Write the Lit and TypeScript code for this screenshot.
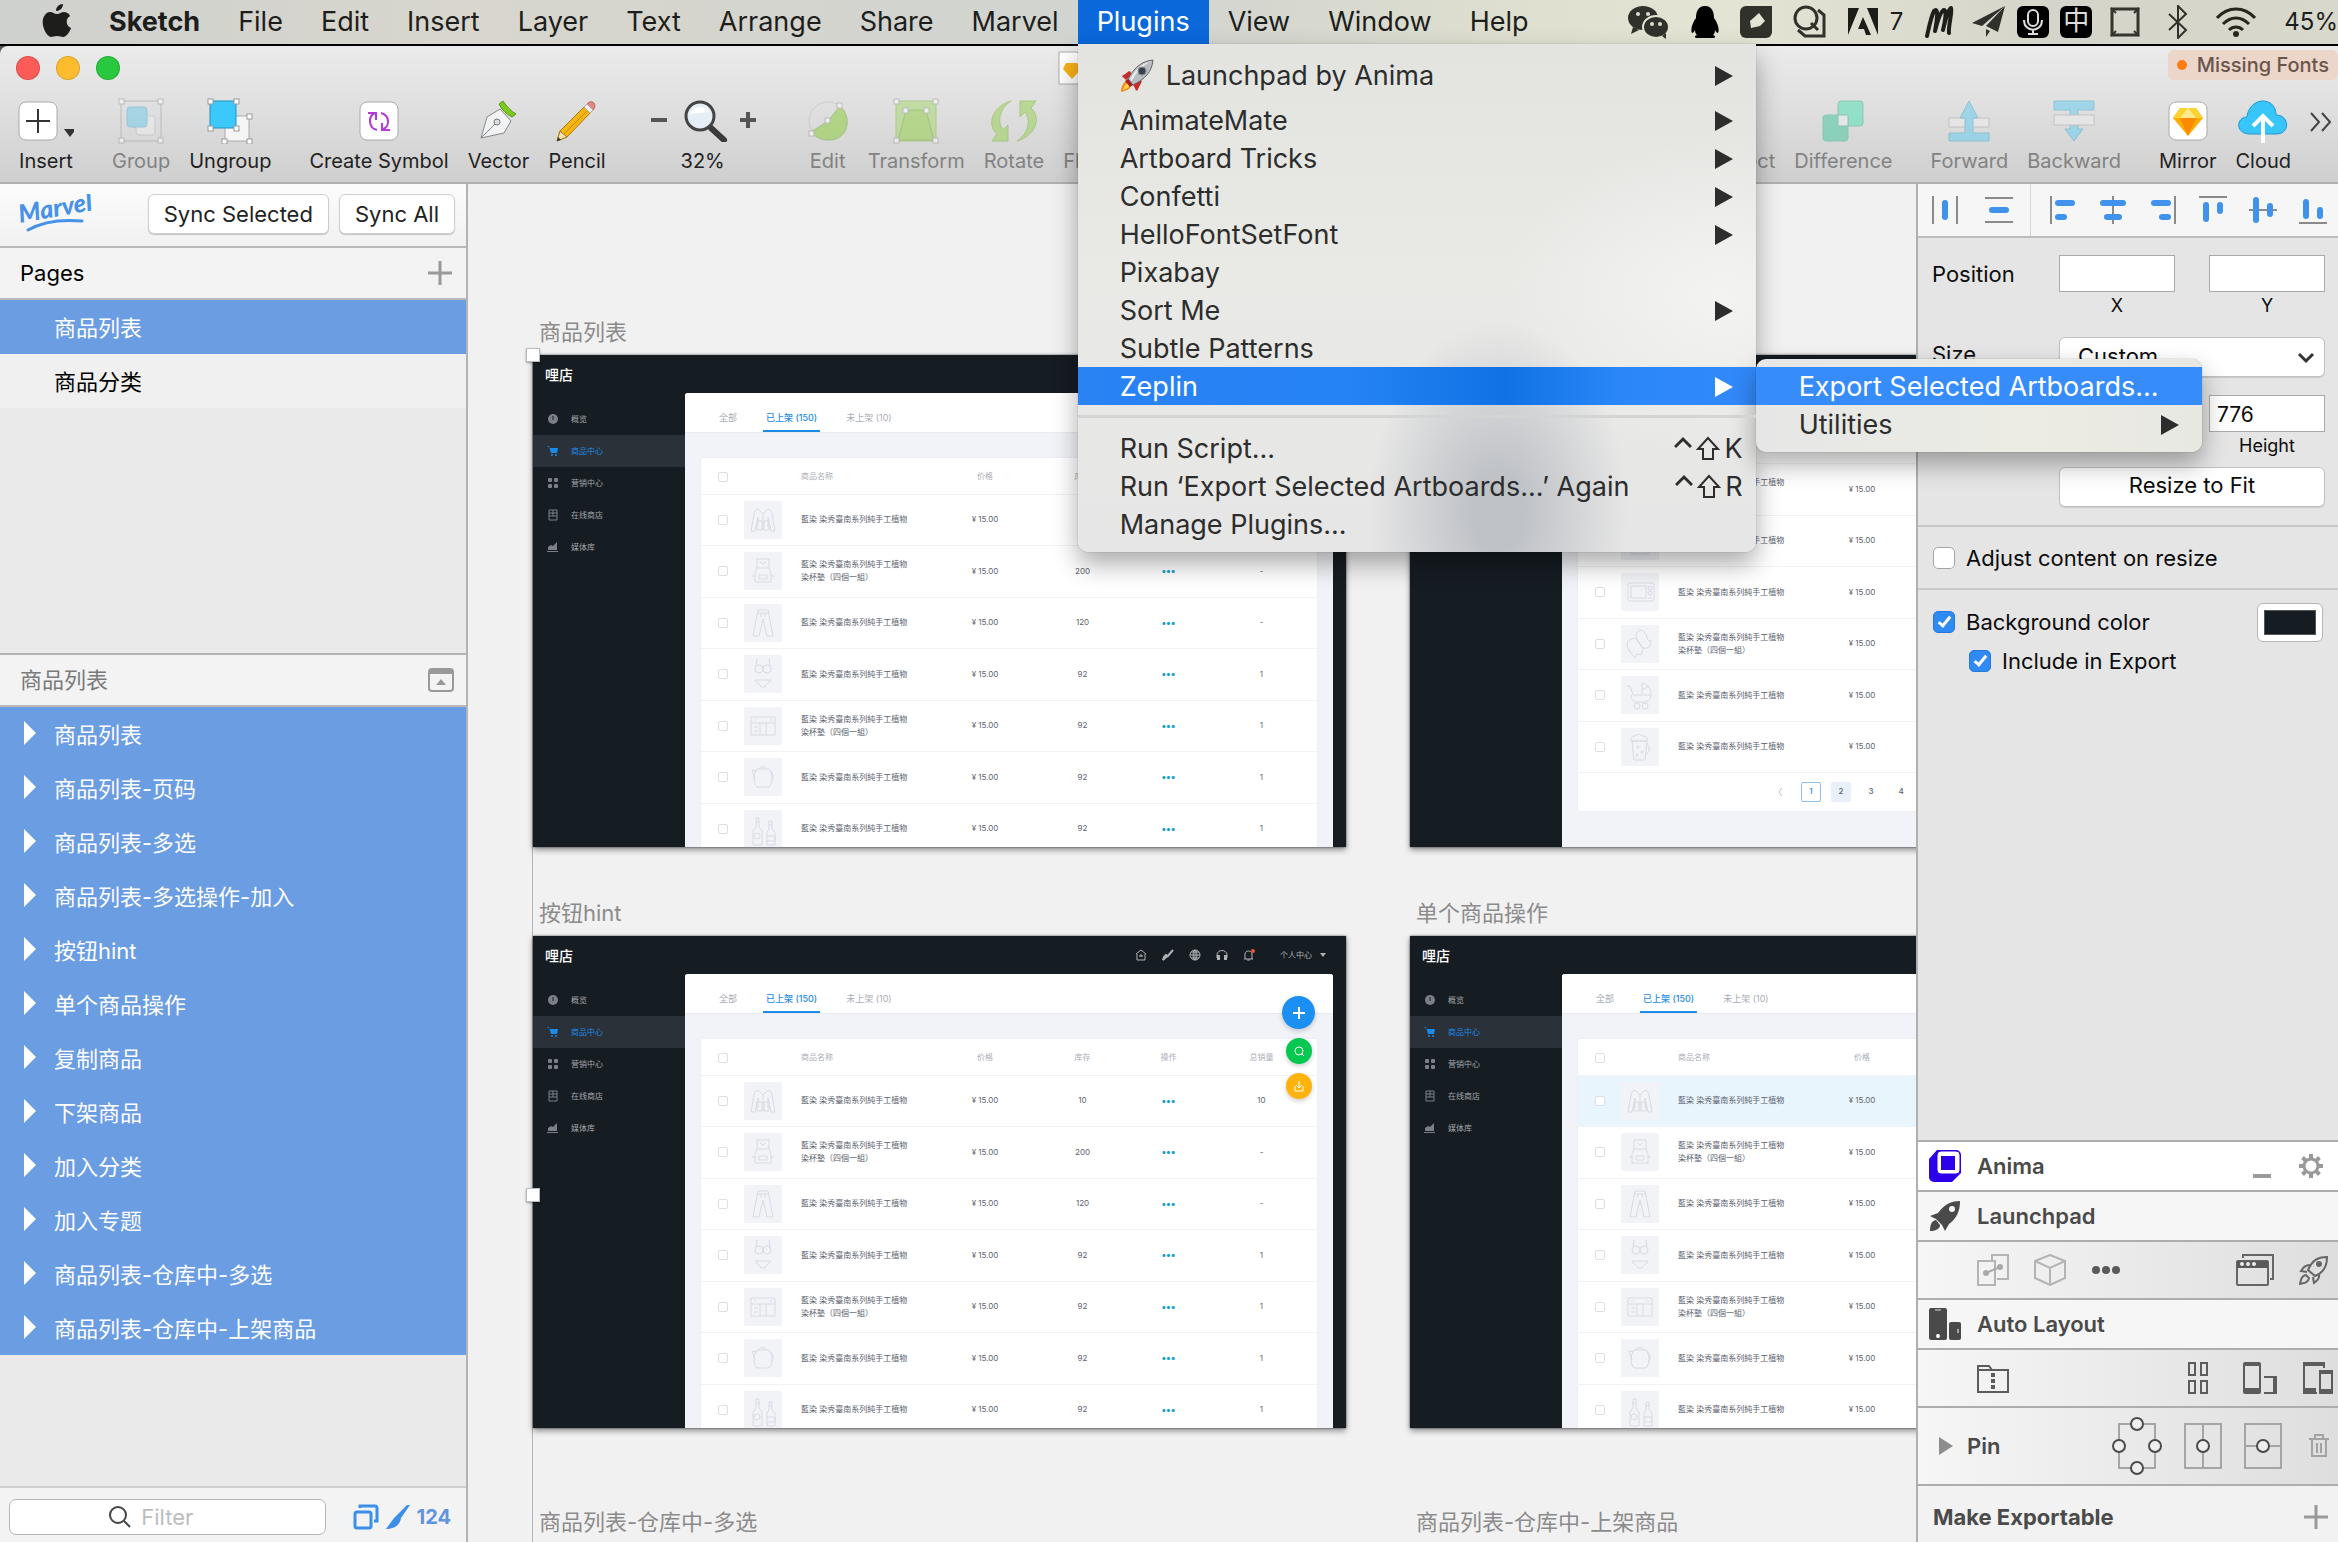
import { LitElement, html, css, svg, nothing, type TemplateResult } from "lit";
import { customElement, property } from "lit/decorators.js";
import { classMap } from "lit/directives/class-map.js";

const base = css`
  *, *::before, *::after { box-sizing: border-box; }
  button { font: inherit; color: inherit; background: none; border: 0; padding: 0; margin: 0; }
  input, select { font: inherit; color: inherit; margin: 0; }
  ul { list-style: none; margin: 0; padding: 0; }
  h2, figure, p { margin: 0; font: inherit; }
  a { color: inherit; text-decoration: none; }
  svg { display: block; flex: none; }
`;

const icon = (w: number, h: number, body: unknown) =>
  html`<svg width=${w} height=${h} viewBox="0 0 ${w} ${h}" fill="none" aria-hidden="true">${body}</svg>`;

/* ---------- product thumbnails ---------- */

const goods: Record<string, TemplateResult> = {
  jacket: svg`<path d="M14 8c-3 1-4 3-4 5L7 30h4l3-14v10M24 8c3 1 4 3 4 5l3 17h-4l-3-14v10M14 8l5 5 5-5M19 13v16M13 20h5v9h-5zM20 20h5v9h-5z"/>`,
  apron: svg`<rect x="13" y="7" width="12" height="9"/><path d="M13 16l-2 5v9h16v-9l-2-5M16 10l3 2 3-2M8 24h3M27 24h3M15 23h8v4h-8z"/>`,
  trousers: svg`<path d="M14 6h10l5 26h-6l-4-17-4 17H9zM14 9h10M17 9v4M21 9v4"/>`,
  bikini: svg`<circle cx="15" cy="14" r="4"/><circle cx="23" cy="14" r="4"/><path d="M12 11l1-7M26 11l-1-7M11 25h16c-1 3-5 3-6 7h-4c-1-4-5-4-6-7z"/>`,
  cabinet: svg`<path d="M7 10h24v18H7zM7 16h24M16 16v12M22 16v12M10 13h2M26 13h2M10 20h4M10 24h4"/>`,
  pot: svg`<path d="M13 11c-4 5-4 14 0 18h12c4-4 4-13 0-18zM15 11c0-3 8-3 8 0M13 13l-5-1 3 9M26 13c4 1 4 8 1 10"/>`,
  bottles: svg`<path d="M12 8h3v9l3 4v14H9V21l3-4zM12 12h3M25 11h3v8l3 3v13h-8V22l2-3zM25 15h3"/><circle cx="13" cy="26" r="3"/><path d="M23 26h8v5h-8"/>`,
  lamp: svg`<path d="M12 8h14l3 10H9zM19 18v10M13 30h12"/>`,
  clock: svg`<circle cx="19" cy="18" r="9"/><path d="M19 12v6l4 2M13 27h12v5H13z"/>`,
  jar: svg`<path d="M12 8h14v4H12zM11 14h16v18H11zM14 20h10v6H14z"/>`,
  oven: svg`<rect x="7" y="10" width="26" height="18" rx="2"/><rect x="10" y="13" width="15" height="12"/><circle cx="29" cy="15" r="2"/><circle cx="29" cy="20" r="2"/><path d="M27 25h4"/>`,
  mittens: svg`<path d="M17 6c5-3 8 3 10 9l3 1-1 5c-3 3-7 3-9 0-4-5-7-11-3-15zM10 14c5-2 8 2 12 10l-2 6-4-1-2 4-4-5c-5-5-5-12 0-14z"/>`,
  pram: svg`<path d="M6 10h3l3 9h18c0 5-4 7-8 7h-6c-4 0-6-3-6-7M21 18V7c5 1 9 5 9 11M21 14l7-4"/><circle cx="16" cy="30" r="3"/><circle cx="24" cy="30" r="3"/>`,
  beer: svg`<path d="M11 13h15l-2 19H13zM10 13c-1-4 3-5 4-5 3-3 6-1 8 0 3 0 5 2 4 5zM25 16c4-1 5 10-1 10"/><circle cx="17" cy="19" r="1"/><circle cx="21" cy="24" r="1"/><circle cx="16" cy="27" r="1"/>`,
};

interface Product { art: string; long?: boolean; stock: string; sales: string; }

const firstPage: Product[] = [
  { art: "jacket", stock: "10", sales: "10" },
  { art: "apron", long: true, stock: "200", sales: "-" },
  { art: "trousers", stock: "120", sales: "-" },
  { art: "bikini", stock: "92", sales: "1" },
  { art: "cabinet", long: true, stock: "92", sales: "1" },
  { art: "pot", stock: "92", sales: "1" },
  { art: "bottles", stock: "92", sales: "1" },
];

const lastPage: Product[] = [
  { art: "lamp", stock: "92", sales: "1" },
  { art: "clock", long: true, stock: "92", sales: "1" },
  { art: "jar", stock: "92", sales: "1" },
  { art: "oven", stock: "92", sales: "1" },
  { art: "mittens", long: true, stock: "92", sales: "1" },
  { art: "pram", stock: "92", sales: "1" },
  { art: "beer", stock: "92", sales: "1" },
];

const shopNav = [
  { label: "概览", art: svg`<circle cx="6" cy="6" r="5" fill="currentColor"/><path d="M6 3v4" stroke="#151c22"/>` },
  { label: "商品中心", art: svg`<path d="M0 1h2l2 7h6l1-5H3z" fill="currentColor"/><circle cx="5" cy="10" r="1" fill="currentColor"/><circle cx="9" cy="10" r="1" fill="currentColor"/>` },
  { label: "营销中心", art: svg`<g fill="currentColor"><rect x="1" y="1" width="4" height="4" rx="1"/><rect x="7" y="1" width="4" height="4" rx="1"/><rect x="1" y="7" width="4" height="4" rx="1"/><rect x="7" y="7" width="4" height="4" rx="1"/></g>` },
  { label: "在线商店", art: svg`<path d="M2 1h8v10H2zM2 4h8M2 7h8M6 1v6" stroke="currentColor"/>` },
  { label: "媒体库", art: svg`<path d="M1 9V6l3-2 2 1 4-4v8zM0 10h11v1H0z" fill="currentColor"/>` },
];

@customElement("shop-board")
export class ShopBoard extends LitElement {
  @property({ type: Boolean }) tail = false;
  @property({ type: Boolean }) hints = false;
  @property({ type: Boolean }) highlight = false;

  static styles = [base, css`
    :host {
      display: grid; grid-template-columns: 152px 1fr 13px; grid-template-rows: 38px 1fr;
      width: 813px; height: 492px; overflow: hidden; position: relative;
      background: #151c22; color: #5c6270;
      font: 8px/13px "Inter", "Noto Sans CJK SC", sans-serif;
    }
    .head { grid-column: 1 / -1; display: flex; align-items: center; padding: 0 20px 0 12px; color: #aeb2b6; }
    .logo { font: 500 14px/16px "Noto Sans CJK SC", sans-serif; color: #fff; margin-right: auto; }
    .tools { display: flex; align-items: center; gap: 15px; }
    .user { display: flex; align-items: center; gap: 8px; margin-left: 10px; }
    .nav { padding-top: 10px; color: #a3a7ab; }
    .nav a { display: flex; align-items: center; gap: 12px; height: 32px; padding-left: 14px; }
    .nav svg { color: #7b8086; }
    .nav a.on { background: #2a3138; color: #1c8be6; }
    .nav a.on svg { color: #1c8be6; }
    .panel { background: #f2f3f8; border-radius: 3px 3px 0 0; overflow: hidden; min-width: 0; }
    .tabs { display: flex; gap: 23px; height: 39px; padding: 0 31px; background: #fff; font-size: 9px; box-shadow: 0 1px 1px #e9eaf0; }
    .tabs button { padding: 18px 3px 0; color: #a9acb6; display: flex; }
    .tabs .on { color: #1c8be6; border-bottom: 2px solid #1c8be6; font-weight: 500; }
    .body { padding: 26px 16px 0; }
    .tail .body { padding-top: 19px; }
    .card { background: #fff; box-shadow: 0 0 2px #e3e5ec; border-radius: 2px; }
    table { border-collapse: collapse; table-layout: fixed; width: 100%; }
    th, td { padding: 0; font-weight: 400; text-align: center; border-bottom: 1px solid #f1f2f5; }
    th { height: 36px; padding-top: 2px; color: #a9acb6; }
    td { height: 51px; }
    tr:nth-child(even) td { height: 52px; }
    tr.lit td { background: #e8f5fd; }
    .c1 { width: 43px; } .c2 { width: 56px; } .c3 { width: 136px; } .c4 { width: 98px; } .c5 { width: 97px; } .c6 { width: 75px; }
    .name { text-align: left; white-space: pre; padding-left: 1px; }
    .more { color: #1ba0cf; font: 700 10px/13px "Inter", sans-serif; }
    input { appearance: none; width: 10px; height: 10px; border: 1px solid #dddfe6; border-radius: 2px; background: #fff; display: block; margin: 0 auto; }
    .thumb { width: 38px; height: 38px; background: #f2f3f7; border-radius: 1px; stroke: #d9dae2; }
    .pages { display: flex; justify-content: flex-end; gap: 10px; height: 38px; align-items: center; padding-right: 283px; font-weight: 500; }
    .pages button { width: 20px; height: 20px; border-radius: 2px; text-align: center; }
    .pages .prev { display: grid; place-items: center; }
    .pages .now { border: 1px solid #8fc0e8; color: #1c8be6; }
    .pages .next { background: #e9f0fa; }
    .fabs { position: absolute; right: 31px; top: 60px; display: flex; flex-direction: column; align-items: center; gap: 9px; }
    .fabs button { width: 26px; height: 26px; border-radius: 50%; display: grid; place-items: center; color: #fff; box-shadow: 0 2px 5px #0003; }
    .fabs .add { width: 33px; height: 33px; background: #1b90f2; }
    .fabs .find { background: #05c850; }
    .fabs .save { background: #fdb30c; }
  `];

  private row(p: Product, i: number) {
    return html`<tr class=${classMap({ lit: this.highlight && i === 0 })}>
      <td><input type="checkbox" aria-label="选择商品 ${i + 1}"></td>
      <td><svg class="thumb" width="38" height="38" viewBox="0 0 38 38" fill="none" aria-hidden="true">${goods[p.art]}</svg></td>
      <td class="name">${"藍染 染秀臺南系列純手工植物" + (p.long ? "\n染杯墊（四個一組）" : "")}</td>
      <td>¥ 15.00</td><td>${p.stock}</td>
      <td><button class="more" aria-label="操作">•••</button></td>
      <td>${p.sales}</td>
    </tr>`;
  }

  render() {
    return html`
      <header class="head">
        <span class="logo">哩店</span>
        <span class="tools">
          ${icon(12, 12, svg`<path d="M1 5l5-4 5 4M2 5v6h8V5M6 5v3M4 7h4" stroke="currentColor"/>`)}
          ${icon(12, 12, svg`<path d="M11 1L5 8M5 7l-4 4 1-3 2-2z" stroke="currentColor" stroke-width="2"/>`)}
          ${icon(12, 12, svg`<circle cx="6" cy="6" r="5" stroke="currentColor"/><path d="M1 6h10M6 1v10M2 3h8M2 9h8" stroke="currentColor"/><ellipse cx="6" cy="6" rx="2" ry="5" stroke="currentColor"/>`)}
          ${icon(12, 12, svg`<path d="M1 9V6c0-6 10-6 10 0v3" stroke="currentColor"/><path d="M1 6h3v5H1zM8 6h3v5H8z" fill="currentColor"/>`)}
          ${icon(12, 12, svg`<path d="M1 10h9M2 10V5c0-4 7-4 7 0v5M4 11h3" stroke="currentColor"/><circle cx="10" cy="2" r="2" fill="#ea5433"/>`)}
          <span class="user">个人中心 ${icon(6, 4, svg`<path d="M0 0h6L3 4z" fill="currentColor"/>`)}</span>
        </span>
      </header>
      <nav class="nav">
        ${shopNav.map((n, i) => html`<a href="#" class=${classMap({ on: i === 1 })}>${icon(12, 12, n.art)}${n.label}</a>`)}
      </nav>
      <section class="panel ${this.tail ? "tail" : ""}">
        ${this.tail ? nothing : html`<div class="tabs">
          <button>全部</button><button class="on">已上架 (150)</button><button>未上架 (10)</button>
        </div>`}
        <div class="body"><div class="card">
          <table>
            <colgroup><col class="c1"><col class="c2"><col class="c3"><col class="c4"><col class="c5"><col class="c6"><col></colgroup>
            ${this.tail ? nothing : html`<thead><tr>
              <th><input type="checkbox" aria-label="全选"></th><th></th><th class="name">商品名称</th>
              <th>价格</th><th>库存</th><th>操作</th><th>总销量</th>
            </tr></thead>`}
            <tbody>${(this.tail ? lastPage : firstPage).map((p, i) => this.row(p, i))}</tbody>
          </table>
          ${this.tail ? html`<div class="pages">
            <button class="prev" aria-label="上一页">${icon(10, 10, svg`<path d="M6 1L3 5l3 4" stroke="#b9bcc4"/>`)}</button>
            <button class="now">1</button><button class="next">2</button><button>3</button><button>4</button>
          </div>` : nothing}
        </div></div>
      </section>
      ${this.hints ? html`<div class="fabs">
        <button class="add" aria-label="添加">${icon(14, 14, svg`<path d="M7 1v12M1 7h12" stroke="currentColor" stroke-width="2"/>`)}</button>
        <button class="find" aria-label="搜索">${icon(12, 12, svg`<circle cx="6" cy="6" r="4" stroke="currentColor"/><path d="M8 8l3 3" stroke="currentColor"/>`)}</button>
        <button class="save" aria-label="导入">${icon(12, 12, svg`<path d="M2 6v5h8V6M6 1v7M3 5l3 3 3-3" stroke="currentColor"/>`)}</button>
      </div>` : nothing}`;
  }
}

/* ---------- system menu bar and plugins menu ---------- */

const arrow = icon(18, 20, svg`<path d="M0 0l18 10L0 20z" fill="currentColor"/>`);

const rocketEmoji = icon(34, 34, svg`
  <path d="M9 12l-7 6 6 1zM21 24l-5 8-2-7z" fill="#d5322c"/><path d="M10 12L2 17l4 4 6-5zM22 22l-5 10-4-6 4-5z" fill="#c52b28"/>
  <path d="M8 21c-5 2-7 7-7 12 5-1 10-3 11-8z" fill="#f08a1c"/><path d="M8 23c-3 2-4 5-5 8 3-1 6-2 7-5z" fill="#fcd34a"/>
  <path d="M33 1C23 2 15 7 8 20l5 6C25 20 32 13 33 1z" fill="#b9bcc0" stroke="#63666a"/><path d="M32 2C23 4 16 9 10 20l2 2C17 12 23 6 32 2z" fill="#e9ebec"/>
  <path d="M8 20l5 6-3 2-5-6z" fill="#a61f20"/><circle cx="22" cy="12" r="4" fill="#3a4450" stroke="#83888d"/>`);

const shift = icon(24, 26, svg`<path d="M12 2L2 13h5v10h10V13h5z" stroke="currentColor" stroke-width="2"/>`);
const ctrl = icon(18, 26, svg`<path d="M1 11l8-8 8 8" stroke="currentColor" stroke-width="3"/>`);

const appStatus = [
  icon(42, 34, svg`<ellipse cx="15" cy="13" rx="15" ry="12" fill="#30312a"/><path d="M5 22l-2 7 8-4z" fill="#30312a"/><ellipse cx="28" cy="22" rx="13" ry="11" fill="#30312a" stroke="#e2e3d3" stroke-width="2"/><path d="M34 31l4 3v-6z" fill="#30312a"/><g fill="#dedfd0"><circle cx="10" cy="9" r="2"/><circle cx="20" cy="9" r="2"/><circle cx="24" cy="19" r="2"/><circle cx="32" cy="19" r="2"/></g>`),
  icon(28, 32, svg`<path d="M14 0c7 0 9 6 9 12 3 4 6 11 4 15-1 0-2-1-3-3 0 3-1 4-2 5 3 1 3 3-1 3H7c-4 0-4-2-1-3-1-1-2-2-2-5-1 2-2 3-3 3-2-4 1-11 4-15 0-6 2-12 9-12z" fill="#000"/>`),
  icon(32, 32, svg`<path d="M6 0h26v26a6 6 0 0 1-6 6H6a6 6 0 0 1-6-6V6a6 6 0 0 1 6-6z" fill="#30312a"/><path d="M19 7l6 8-5 5-9 2-1-7z" fill="#e4e4d4"/>`),
  icon(34, 34, svg`<circle cx="13" cy="13" r="11" stroke="#30312a" stroke-width="3"/><path d="M18 18l7 7" stroke="#30312a" stroke-width="3"/><path d="M25 5l6 5v21H12l-7-6" stroke="#30312a" stroke-width="3"/>`),
  html`<span class="ad">${icon(30, 28, svg`<path d="M0 0h11L0 27zM19 0h11v27zM15 9l8 18h-5l-2-6h-6z" fill="#1c1c18"/>`)} 7</span>`,
  icon(30, 34, svg`<path d="M3 31C5 22 7 12 10 6c4-4 4 4 1 20C14 14 17 6 20 5c3 0 1 12-1 20C22 12 24 5 27 3c2 2-3 18-2 25" stroke="#1e1e1a" stroke-width="4" stroke-linecap="round" stroke-linejoin="round"/>`),
];

const inputStatus = [
  icon(34, 32, svg`<path d="M33 0L0 17l10 3zM33 0L14 20l12 6zM14 23v8l4-6z" fill="#30312a"/>`),
  icon(32, 32, svg`<rect width="32" height="32" rx="6" fill="#000"/><rect x="11" y="4" width="10" height="16" rx="5" stroke="#ddd" stroke-width="2"/><path d="M7 14c0 13 18 13 18 0M16 24v4M11 28h10" stroke="#ddd" stroke-width="2"/>`),
  html`<span class="ime">中</span>`,
];

const deviceStatus = [
  icon(30, 30, svg`<rect x="2" y="2" width="26" height="26" stroke="#33342c" stroke-width="3"/><path d="M1 1l5 5M29 1l-5 5M1 29l5-5M29 29l-5-5" stroke="#33342c" stroke-width="2"/>`),
  icon(20, 34, svg`<path d="M1 9l17 16-8 8V1l8 8L1 25" stroke="#30312a" stroke-width="2"/>`),
  icon(40, 30, svg`<path d="M1 11c11-12 27-12 38 0M7 17c8-8 18-8 26 0M13 23c4-4 10-4 14 0" stroke="#26271f" stroke-width="3"/><circle cx="20" cy="27" r="3" fill="#26271f"/>`),
];

@customElement("system-bar")
export class SystemBar extends LitElement {
  static styles = [base, css`
    :host {
      display: flex; align-items: center; justify-content: space-between; height: 46px; padding-left: 38px;
      border-bottom: 2px solid #000; color: #1d1e1c; position: relative; z-index: 5;
      background: linear-gradient(90deg, #cfd1ce, #d8d6cd 20%, #d2d4cf 40%, #d2d4cf 50%, #dfe0d0 66%, #e4e4d4 74%, #d5d4ca 88%, #d8d8cc);
      font: 27px/44px "Inter", "Noto Sans CJK SC", sans-serif; white-space: nowrap;
    }
    .menus { display: flex; }
    .menus > li { padding: 0 19px; position: relative; }
    .menus > .app { font-weight: 700; }
    .menus > .logo { padding: 4px 18px 0 4px; }
    .menus > .open { background: #0a68da; color: #fff; }
    .status, .cluster { display: flex; align-items: center; }
    .status { gap: 18px; font-size: 24px; }
    .apps { gap: 21px; } .inputs { gap: 11px; } .devices { gap: 28px; }
    .ad { display: flex; align-items: center; gap: 12px; }
    .ime { width: 32px; height: 32px; border-radius: 6px; background: #000; color: #ddd; font-size: 26px; line-height: 30px; text-align: center; }
    .menu {
      position: absolute; color: #2c2d2c; text-align: left;
      border-radius: 0 0 10px 10px; box-shadow: 0 0 1px #0008, 0 12px 26px #0005;
    }
    .plugins {
      left: 0; top: 44px; width: 678px; padding: 6px 0 9px;
      background:
        radial-gradient(ellipse 130px 190px at 62% 92%, #bfc2c7 20%, #bfc2c700 100%),
        radial-gradient(ellipse 220px 160px at 95% 50%, #f3f3f2, #f3f3f200),
        linear-gradient(#e3e4e0, #e9e9e6 45%, #e6e6e6);
    }
    .menu button { display: flex; align-items: center; width: 100%; height: 38px; padding: 1px 23px 0 42px; }
    .menu .tall button { height: 51px; gap: 12px; }
    .menu li { position: relative; }
    .menu svg:last-child { margin-left: auto; }
    .menu .on > button { background: linear-gradient(90deg, #2a82f3, #2583f5 40%, #0f72e4 63%, #2b87f8 80%, #3289fa); color: #fff; }
    .menu hr { margin: 10px 0 11px; border: 0; border-top: 3px solid #d3d4d4; }
    .keys { margin-left: auto; margin-right: -10px; display: flex; align-items: center; gap: 4px; }
    .keys svg:last-child { margin: 0; }
    .sub { left: 678px; top: -8px; width: 446px; padding: 8px 0; border-radius: 10px; background: linear-gradient(90deg, #e6e6e6, #ecece4 60%, #e8e8e2); }
    .sub button { padding-left: 43px; }
    .sub .on > button { background: #378cfb; }
    .sub li:last-child { padding-bottom: 1px; }
  `];

  render() {
    const plain = (t: string, sub = false) => html`<li><button>${t}${sub ? arrow : nothing}</button></li>`;
    return html`
      <ul class="menus">
        <li class="logo">${icon(30, 34, svg`<path d="M21 0c0 4-3 7-7 7 0-4 3-7 7-7zM8 8c3 0 4 2 7 2s4-2 7-2c2 0 5 1 6 4-5 3-4 10 1 12-1 4-5 9-8 9-2 0-3-1-6-1s-4 1-6 1C4 33-3 18 3 11c1-2 3-3 5-3z" fill="#1d1e1c"/>`)}</li>
        <li class="app">Sketch</li>
        ${["File", "Edit", "Insert", "Layer", "Text", "Arrange", "Share", "Marvel"].map((m) => html`<li><button>${m}</button></li>`)}
        <li class="open"><button>Plugins</button>
          <ul class="menu plugins">
            <li class="tall"><button>${rocketEmoji}Launchpad by Anima${arrow}</button></li>
            ${plain("AnimateMate", true)}${plain("Artboard Tricks", true)}${plain("Confetti", true)}
            ${plain("HelloFontSetFont", true)}${plain("Pixabay")}${plain("Sort Me", true)}${plain("Subtle Patterns")}
            <li class="on"><button>Zeplin${arrow}</button>
              <ul class="menu sub">
                <li class="on"><button>Export Selected Artboards...</button></li>
                ${plain("Utilities", true)}
              </ul>
            </li>
            <li><hr></li>
            <li><button>Run Script...<span class="keys">${ctrl}${shift}<span>K</span></span></button></li>
            <li><button>Run ‘Export Selected Artboards...’ Again<span class="keys">${ctrl}${shift}<span>R</span></span></button></li>
            ${plain("Manage Plugins...")}
          </ul>
        </li>
        ${["View", "Window", "Help"].map((m) => html`<li><button>${m}</button></li>`)}
      </ul>
      <div class="status">
        <div class="cluster apps">${appStatus}</div>
        <div class="cluster inputs">${inputStatus}</div>
        <div class="cluster devices">${deviceStatus}<span>45%</span></div>
      </div>`;
  }
}

/* ---------- window title bar and toolbar ---------- */

const tile = svg`<rect x="1" y="1" width="38" height="38" rx="7" fill="#fff" stroke="#aaa"/>`;
const grip = (x: number, y: number) => svg`<rect x=${x} y=${y} width="5" height="5" fill="#fff" stroke="#999"/>`;

const tools = {
  insert: icon(56, 40, svg`<g>${tile}</g><path d="M20 8v24M8 20h24" stroke="#333" stroke-width="2"/><path d="M46 28h12l-6 8z" fill="#333"/>`),
  group: icon(46, 46, svg`<rect x="3" y="3" width="40" height="40" stroke="#999"/><rect x="18" y="18" width="19" height="19" rx="3" fill="#eee" stroke="#bbb"/><rect x="9" y="9" width="20" height="20" rx="3" fill="#6fcbea" stroke="#58b0d0"/>${grip(1, 1)}${grip(40, 1)}${grip(1, 40)}${grip(40, 40)}`),
  ungroup: icon(46, 46, svg`<rect x="18" y="18" width="24" height="25" fill="#f5f5f5" stroke="#aaa"/><rect x="3" y="3" width="26" height="27" fill="#3cc8fb" stroke="#2392c4"/>${grip(1, 1)}${grip(27, 1)}${grip(1, 28)}${grip(27, 28)}${grip(40, 16)}${grip(15, 41)}${grip(40, 41)}`),
  symbol: icon(40, 40, svg`<g>${tile}</g><path d="M18 29c-9-2-9-14-2-17M9 12h8v7M22 12c9 2 9 14 2 16M31 29h-8v-7" stroke="#b53ad6" stroke-width="2"/>`),
  vector: icon(42, 42, svg`<path d="M3 38l6-21 13-8 11 12-7 12z" fill="#f2f3f4" stroke="#888"/><path d="M3 38l15-15" stroke="#888"/><circle cx="19" cy="22" r="3" fill="#ddd" stroke="#777"/><path d="M25 1c4 6 8 10 13 13l-4 3c-6-3-10-7-13-13z" fill="#7ccb1b" stroke="#58971a"/>`),
  pencil: icon(42, 42, svg`<path d="M1 41l3-10L31 4l6 6-26 27z" fill="#f7b512" stroke="#a87812"/><path d="M1 41l3-10 7 6z" fill="#f5deb3" stroke="#a87812"/><path d="M1 41l1-4 3 3z" fill="#333"/><path d="M8 34L33 9" stroke="#c98c0c"/><path d="M31 4c5-6 11 1 6 6z" fill="#e9857f" stroke="#a86562"/><path d="M28 7l6 6 3-3-6-6z" fill="#eee" stroke="#aaa"/>`),
  zoom: icon(106, 42, svg`<path d="M1 20h16M90 20h16M98 12v16" stroke="#555" stroke-width="4"/><path d="M61 28l13 12" stroke="#3a3a3a" stroke-width="6" stroke-linecap="round"/><circle cx="50" cy="16" r="14" fill="#e6eef6" stroke="#444" stroke-width="3"/><path d="M40 14c2-8 16-10 19-2" fill="#fff"/>`),
  edit: icon(42, 42, svg`<circle cx="21" cy="21" r="19" stroke="#bbb"/><path d="M33 6C46 18 41 40 22 40 14 40 8 37 4 32l17-11z" fill="#86cc33" stroke="#6bab26"/>${grip(30, 3)}${grip(18, 18)}${grip(2, 31)}`),
  transform: icon(46, 46, svg`<rect x="3" y="3" width="40" height="40" fill="#a5d96a" stroke="#7db844"/><path d="M13 12h20l8 30H5z" fill="#8fce3e" stroke="#6ba72a"/>${grip(1, 1)}${grip(40, 1)}${grip(1, 40)}${grip(40, 40)}${grip(10, 10)}${grip(31, 10)}`),
  rotate: icon(50, 42, svg`<path d="M22 1C4 6-3 24 8 34l-5 7h16V25l-5 5C8 22 10 9 22 1zM28 41c18-5 25-23 14-33l5-7H31v16l5-5c6 8 4 21-8 29z" fill="#93d14b" stroke="#74b22f"/>`),
  flatten: icon(42, 42, svg`<path d="M3 21h36L21 40z" fill="#93d14b"/>`),
  overlap: icon(30, 42, svg`<rect x="1" y="8" width="18" height="18" fill="#5cd3a8"/><rect x="9" y="16" width="18" height="18" fill="#5cd3a8"/>`),
  difference: icon(42, 42, svg`<rect x="16" y="1" width="25" height="25" rx="3" fill="#4be0b4" stroke="#3fae8c"/><rect x="1" y="15" width="25" height="26" rx="3" fill="#3fc79d" stroke="#3fae8c"/><rect x="16" y="15" width="10" height="11" rx="1" fill="#eee" stroke="#3fae8c"/>`),
  forward: icon(42, 42, svg`<rect x="1" y="18" width="40" height="9" fill="#eee" stroke="#aaa"/><path d="M21 1l9 17h-5v15h16v8H1v-8h16V18h-5z" fill="#60cdf2" stroke="#4aa6c9"/>`),
  backward: icon(42, 42, svg`<path d="M1 1h40v9H25v19h5l-9 12-9-12h5V10H1z" fill="#60cdf2" stroke="#4aa6c9"/><rect x="1" y="15" width="40" height="10" fill="#eee" stroke="#aaa"/>`),
  mirror: icon(40, 40, svg`<g>${tile}</g><path d="M12 7h16l7 10-15 18L5 17z" fill="#fdad00"/><path d="M12 7h16l7 10H5z" fill="#fdd231"/><path d="M12 17h16l-8 18z" fill="#fb8a00"/><path d="M20 7l8 10H12z" fill="#fee98b"/>`),
  cloud: icon(50, 46, svg`<path d="M12 36C-3 36-2 19 9 19 10 8 20 0 30 4c6 2 8 8 8 13 14 0 14 19 1 19z" fill="#38c6fa" stroke="#1e98cc"/><path d="M25 45V18M15 28l10-10 10 10" stroke="#fff" stroke-width="4"/>`),
};

@customElement("tool-bar")
export class ToolBar extends LitElement {
  static styles = [base, css`
    :host {
      display: flex; flex-direction: column; height: 138px; overflow: hidden; border-bottom: 2px solid #b0b0b0;
      background: linear-gradient(#ebebeb, #dedede 50%, #cfcfcf); border-radius: 8px 0 0 0;
      font: 20px/24px "Inter", sans-serif; color: #222; white-space: nowrap;
    }
    .title { display: flex; align-items: center; height: 44px; padding-left: 16px; gap: 16px; }
    .light { width: 24px; height: 24px; border-radius: 50%; border: 1px solid #0002; }
    .red { background: #fc5b57; } .amber { background: #fdbc2e; } .green { background: #28c83f; }
    .doc { margin-left: 922px; }
    .missing { margin-left: auto; display: flex; align-items: center; gap: 10px; height: 30px; padding: 0 9px; margin-bottom: 6px; border-radius: 6px; background: #ecd5c9; color: #6a554b; font-weight: 500; }
    .missing::before { content: ""; width: 10px; height: 10px; border-radius: 50%; background: #fb7d14; }
    .row { display: flex; justify-content: space-between; padding: 7px 6px 0 18px; }
    .side, .set { display: flex; }
    .side { gap: 38px; }
    .set { gap: 19px; }
    .tool { display: flex; flex-direction: column; align-items: center; }
    .tool .pic { height: 52px; padding-bottom: 4px; display: flex; align-items: center; }
    .off { color: #828282; }
    .off svg { opacity: .5; }
    .zoom { margin: 0 13px 0 6px; }
    .more { height: 50px; margin-left: -19px; }
  `];

  private tool(label: string, pic: TemplateResult, off = false, extra = "") {
    return html`<button class="tool ${off ? "off" : ""} ${extra}"><span class="pic">${pic}</span>${label}</button>`;
  }

  render() {
    return html`
      <div class="title">
        <button class="light red" aria-label="Close"></button><button class="light amber" aria-label="Minimize"></button><button class="light green" aria-label="Zoom"></button>
        <span class="doc">${icon(28, 34, svg`<path d="M1 1h18l8 8v24H1z" fill="#fff" stroke="#aaa"/><path d="M8 12h11l4 6-9 10-9-10z" fill="#fbb117"/>`)}</span>
        <button class="missing">Missing Fonts</button>
      </div>
      <div class="row">
        <div class="side">
          <div class="set">${this.tool("Insert", tools.insert)}</div>
          <div class="set">${this.tool("Group", tools.group, true)}${this.tool("Ungroup", tools.ungroup)}</div>
          <div class="set">${this.tool("Create Symbol", tools.symbol)}${this.tool("Vector", tools.vector)}${this.tool("Pencil", tools.pencil)}</div>
          <div class="set">${this.tool("32%", tools.zoom, false, "zoom")}</div>
          <div class="set">${this.tool("Edit", tools.edit, true)}${this.tool("Transform", tools.transform, true)}${this.tool("Rotate", tools.rotate, true)}${this.tool("Flatten", tools.flatten, true)}</div>
        </div>
        <div class="side">
          <div class="set">${this.tool("Intersect", tools.overlap, true)}${this.tool("Difference", tools.difference, true)}</div>
          <div class="set">${this.tool("Forward", tools.forward, true)}${this.tool("Backward", tools.backward, true)}</div>
          <div class="set">${this.tool("Mirror", tools.mirror)}${this.tool("Cloud", tools.cloud)}</div>
          <button class="more" aria-label="More tools">${icon(22, 20, svg`<path d="M1 1l8 9-8 9M12 1l8 9-8 9" stroke="#444" stroke-width="2"/>`)}</button>
        </div>
      </div>`;
  }
}

/* ---------- left column ---------- */

const layers = [
  "商品列表", "商品列表-页码", "商品列表-多选", "商品列表-多选操作-加入", "按钮hint", "单个商品操作",
  "复制商品", "下架商品", "加入分类", "加入专题", "商品列表-仓库中-多选", "商品列表-仓库中-上架商品",
];

@customElement("layer-list")
export class LayerList extends LitElement {
  static styles = [base, css`
    :host {
      display: flex; flex-direction: column; min-height: 0; background: #eaeaea; border-right: 2px solid #b3b3b3;
      font: 22px/26px "Inter", "Noto Sans CJK SC", sans-serif; color: #000;
    }
    .bar { display: flex; align-items: center; flex: none; background: #f3f3f3; border-bottom: 2px solid #b9b9b9; padding: 0 14px 0 20px; }
    .sync { height: 64px; gap: 10px; padding: 0 11px 2px 18px; background: linear-gradient(#fcfcfc, #f1f1f1); color: #222; }
    .sync svg { margin-right: auto; }
    .brand { fill: #4592e8; font: italic 900 25px "Lato", sans-serif; }
    .sync button { height: 40px; padding: 0 15px; background: #fff; border: 1px solid #cfcfcf; border-radius: 6px; box-shadow: 0 1px 1px #0003; }
    .pages { height: 52px; justify-content: space-between; }
    .page { display: flex; align-items: center; width: 100%; height: 54px; padding: 2px 0 0 54px; background: #f0f0f0; }
    .layer { display: flex; align-items: center; width: 100%; height: 54px; padding: 2px 0 0 24px; gap: 18px; }
    .layer svg { margin-bottom: 4px; }
    .page.on, .on { background: #6b9de2; color: #fff; }
    .group { height: 54px; justify-content: space-between; border-top: 2px solid #b3b3b3; color: #7a7a7a; padding-right: 12px; }
    .blank { flex: 1 1 244px; max-height: 245px; }
    .fill { flex: 1; }
    .foot { height: 56px; border: 0; border-top: 2px solid #cfcfcf; padding: 3px 15px 0 9px; color: #5f94e0; font-weight: 700; font-size: 20px; }
    .search { display: flex; align-items: center; justify-content: center; gap: 10px; width: 320px; height: 36px; margin-right: 27px; background: #fff; border: 1px solid #b5b5b5; border-radius: 7px; color: #333; font-weight: 400; font-size: 22px; }
    .search input { width: 84px; border: 0; padding: 0; outline: 0; background: none; }
    .search input::placeholder { color: #bdbdbd; opacity: 1; }
    .foot > svg { margin-right: 7px; }
  `];

  render() {
    return html`
      <div class="bar sync">
        ${icon(84, 40, svg`<text class="brand" x="2" y="29" transform="rotate(-10 2 29)">Marvel</text><path d="M10 36c14-8 32-11 54-9" stroke="#4592e8" stroke-width="3" stroke-linecap="round"/>`)}
        <button>Sync Selected</button><button>Sync All</button>
      </div>
      <div class="bar pages"><h2>Pages</h2><button aria-label="Add page">${icon(24, 24, svg`<path d="M12 0v24M0 12h24" stroke="#999" stroke-width="3"/>`)}</button></div>
      <button class="page on">商品列表</button>
      <button class="page">商品分类</button>
      <div class="blank"></div>
      <div class="bar group"><h2>商品列表</h2><button aria-label="Collapse">${icon(26, 24, svg`<rect x="1" y="1" width="24" height="22" rx="3" stroke="#999" stroke-width="2"/><path d="M1 2h24v4H1zM8 17l5-6 5 6z" fill="#999"/>`)}</button></div>
      <ul>${layers.map((l) => html`<li><button class="layer on">${icon(12, 24, svg`<path d="M0 0l12 12L0 24z" fill="#fff"/>`)}${l}</button></li>`)}</ul>
      <div class="fill"></div>
      <div class="bar foot">
        <label class="search">${icon(22, 22, svg`<circle cx="9" cy="9" r="8" stroke="#444" stroke-width="2"/><path d="M15 15l6 6" stroke="#444" stroke-width="2"/>`)}<input type="text" placeholder="Filter" aria-label="Filter"></label>
        ${icon(26, 26, svg`<rect x="2" y="8" width="16" height="16" rx="2" stroke="#3b8fe8" stroke-width="3"/><path d="M7 4V2h15a2 2 0 0 1 2 2v13h-3" stroke="#3b8fe8" stroke-width="3"/>`)}
        ${icon(24, 24, svg`<path d="M24 0l-3 0L8 13 0 24c7 0 14-3 15-11z" fill="#3b8fe8"/>`)}
        <span>124</span>
      </div>`;
  }
}

/* ---------- right column ---------- */

const bar = (x: number, y: number, w: number, h: number) => svg`<rect x=${x} y=${y} width=${w} height=${h} rx="3" fill="#3f93ec"/>`;
const rule = (d: string) => svg`<path d=${d} stroke="#8a8a8a" stroke-width="2"/>`;

const spread: [string, TemplateResult][] = [
  ["Distribute horizontally", svg`${rule("M2 0v28M26 0v28")}${bar(11, 4, 6, 20)}`],
  ["Distribute vertically", svg`${rule("M0 2h28M0 26h28")}${bar(4, 11, 20, 6)}`],
];
const align: [string, TemplateResult][] = [
  ["Align left", svg`${rule("M2 0v28")}${bar(6, 4, 20, 6)}${bar(6, 18, 12, 6)}`],
  ["Align center", svg`${rule("M14 0v28")}${bar(1, 4, 26, 6)}${bar(5, 18, 18, 6)}`],
  ["Align right", svg`${rule("M26 0v28")}${bar(2, 4, 20, 6)}${bar(10, 18, 12, 6)}`],
  ["Align top", svg`${rule("M0 1h28")}${bar(4, 6, 6, 20)}${bar(18, 6, 6, 12)}`],
  ["Align middle", svg`${rule("M0 14h28")}${bar(4, 1, 6, 26)}${bar(18, 7, 6, 14)}`],
  ["Align bottom", svg`${rule("M0 27h28")}${bar(4, 3, 6, 20)}${bar(18, 11, 6, 12)}`],
];

const teeth = [0, 45, 90, 135, 180, 225, 270, 315];

@customElement("inspector-panel")
export class InspectorPanel extends LitElement {
  static styles = [base, css`
    :host {
      display: flex; flex-direction: column; min-height: 0; background: #e5e5e5; border-left: 2px solid #b0b0b0;
      font: 22px/26px "Inter", sans-serif; color: #0c0c0c; position: relative;
    }
    .align { display: flex; height: 54px; flex: none; background: #f6f6f6; border-bottom: 2px solid #bdbdbd; }
    .align button { display: grid; place-items: center; }
    .pair { display: grid; grid-template-columns: 54px 54px; padding-right: 4px; border-right: 1px solid #d5d5d5; }
    .six { display: grid; grid-template-columns: repeat(6, 50px); margin-left: 7px; }
    .geo { display: grid; grid-template-columns: 1fr 116px 116px; column-gap: 34px; padding: 17px 13px 18px 14px; }
    .geo > span { line-height: 38px; }
    .geo > .wide { grid-column: span 2; }
    .field { display: flex; flex-direction: column; text-align: center; font-size: 18px; line-height: 28px; }
    .field input { height: 37px; width: 100%; border: 1px solid #a9a9a9; background: #fff; padding: 2px 7px 0; font-size: 21px; border-radius: 0; }
    .size { margin-top: 17px; }
    .geo > span.size { line-height: 34px; }
    .dims { margin-top: 18px; }
    .combo { position: relative; display: block; }
    .combo svg { position: absolute; right: 10px; top: 15px; }
    .combo select, .fit { appearance: none; width: 100%; height: 40px; background: #fff; border: 1px solid #c2c2c2; border-radius: 6px; box-shadow: 0 1px 1px #0002; }
    .combo select { padding: 0 18px 2px; }
    .fit { margin-top: 7px; padding-bottom: 5px; }
    .check { display: flex; align-items: center; gap: 11px; }
    .check input { appearance: none; width: 22px; height: 22px; border: 1px solid #a5a5a5; border-radius: 5px; background: #fff; display: grid; place-items: center; }
    .check input:checked { background: #2f8bf3; border-color: #2479da; }
    .check input:checked::after { content: ""; width: 7px; height: 13px; border: solid #fff; border-width: 0 3px 3px 0; transform: rotate(40deg); margin-bottom: 3px; }
    .adjust { height: 65px; padding: 0 15px; border: solid #c9c9c9; border-width: 2px 0; flex: none; }
    .bg { padding: 13px 15px 0; }
    .line { display: flex; justify-content: space-between; align-items: center; height: 38px; }
    .well { width: 66px; height: 39px; border: 1px solid #b5b5b5; border-radius: 6px; background: #fff; padding: 6px; }
    .well::before { content: ""; display: block; height: 25px; background: #151c22; border: 1px solid #555; }
    .nested { height: 40px; padding-left: 36px; }
    .fill { flex: 1; }
    .row { display: flex; align-items: center; flex: none; height: 50px; border-bottom: 2px solid #adadad; background: #f6f6f6; color: #4a4a4a; font-weight: 600; padding: 0 15px 0 11px; }
    .row > span { margin-right: auto; }
    .head > svg { margin-right: 16px; }
    .anima { background: #fff; border-top: 2px solid #adadad; height: 52px; }
    .acts { height: 58px; padding: 0 9px 0 59px; background: linear-gradient(90deg, #f6f6f6, #dedede); }
    .acts button + button { margin-left: 25px; }
    .acts button.push { margin-left: auto; }
    .layouts { padding-right: 5px; }
    .pin { height: 78px; padding-left: 21px; background: linear-gradient(90deg, #f6f6f6, #dedede); padding-right: 9px; }
    .pin span { margin-left: 14px; }
    .pin button { margin-left: 22px; }
    .make { height: 56px; border: 0; padding: 5px 10px 0 15px; background: #f2f2f2; font-weight: 700; }
    .gear { margin-left: 28px; }
    .pin .bin { margin-left: 27px; }
  `];

  private pick([name, art]: [string, TemplateResult]) {
    return html`<button aria-label=${name}>${icon(28, 28, art)}</button>`;
  }

  render() {
    return html`
      <div class="align">
        <div class="pair">${spread.map((a) => this.pick(a))}</div>
        <div class="six">${align.map((a) => this.pick(a))}</div>
      </div>
      <div class="geo">
        <span>Position</span>
        <label class="field"><input type="text">X</label>
        <label class="field"><input type="text">Y</label>
        <span class="size">Size</span>
        <label class="combo wide size"><select aria-label="Size"><option>Custom</option></select>${icon(18, 12, svg`<path d="M2 2l7 7 7-7" stroke="#333" stroke-width="3"/>`)}</label>
        <span></span>
        <label class="field dims"><input type="text" value="1280">Width</label>
        <label class="field dims"><input type="text" value="776">Height</label>
        <span></span>
        <button class="fit wide">Resize to Fit</button>
      </div>
      <label class="check adjust"><input type="checkbox">Adjust content on resize</label>
      <div class="bg">
        <div class="line"><label class="check"><input type="checkbox" checked>Background color</label><button class="well" aria-label="Background color"></button></div>
        <label class="check nested"><input type="checkbox" checked>Include in Export</label>
      </div>
      <div class="fill"></div>
      <div class="row head anima">
        ${icon(32, 32, svg`<path d="M8 0h19a5 5 0 0 1 5 5v18l-9 9H5a5 5 0 0 1-5-5V9z" fill="#2c00e8"/><rect x="8" y="1" width="23" height="23" rx="4" fill="#fff" stroke="#2c00e8"/><rect x="12" y="6" width="14" height="14" fill="#2c00e8"/>`)}
        <span>Anima</span>
        <button aria-label="Minimize">${icon(18, 24, svg`<path d="M0 22h18" stroke="#9a9a9a" stroke-width="4"/>`)}</button>
        <button class="gear" aria-label="Settings">${icon(24, 24, svg`<circle cx="12" cy="12" r="7" stroke="#999" stroke-width="3"/>${teeth.map((t) => svg`<path d="M12 0v4" stroke="#999" stroke-width="4" transform="rotate(${t} 12 12)"/>`)}`)}</button>
      </div>
      <div class="row head">
        ${icon(32, 32, svg`<path d="M31 1C21 1 15 5 9 13l-8 3 6 3 6 6 3 6 4-7c8-6 11-13 11-23z" fill="#4a4a4a"/><circle cx="23" cy="9" r="3" fill="#f6f6f6"/><path d="M7 20c-5 1-6 6-6 11 5 0 10-2 10-6z" fill="#4a4a4a"/>`)}
        <span>Launchpad</span>
      </div>
      <div class="row acts">
        <button aria-label="Link">${icon(32, 32, svg`<path d="M15 6V1h16v24H20M1 7h17v24H1z" stroke="#b4b4b4" stroke-width="2"/><path d="M9 19l14-6" stroke="#aaa" stroke-width="2"/><circle cx="9" cy="19" r="3" fill="#aaa"/><circle cx="23" cy="13" r="3" fill="#aaa"/>`)}</button>
        <button aria-label="Component">${icon(32, 32, svg`<path d="M16 1l15 6v17l-15 7-15-7V7zM1 7l15 7 15-7M16 14v17" stroke="#b4b4b4" stroke-width="2"/>`)}</button>
        <button aria-label="More">${icon(30, 10, svg`<g fill="#5a5a5a"><circle cx="5" cy="5" r="4"/><circle cx="15" cy="5" r="4"/><circle cx="25" cy="5" r="4"/></g>`)}</button>
        <button class="push" aria-label="Preview">${icon(38, 32, svg`<path d="M7 4V1h30v24h-3" stroke="#666" stroke-width="2"/><rect x="1" y="7" width="31" height="24" rx="1" stroke="#666" stroke-width="2"/><path d="M1 7h31v7H1z" fill="#5a5a5a"/><g fill="#eee"><circle cx="6" cy="10" r="2"/><circle cx="12" cy="10" r="2"/><circle cx="18" cy="10" r="2"/></g>`)}</button>
        <button aria-label="Publish">${icon(30, 30, svg`<path d="M28 2C18 2 13 6 9 15l7 6c8-3 12-9 12-19zM11 10c-5 0-7 3-9 6l6 1M20 19c1 4-2 7-5 9l-1-6M7 20c-5 1-5 5-6 9 4-1 8-1 9-6z" stroke="#666" stroke-width="2"/><circle cx="20" cy="9" r="3" fill="#666"/>`)}</button>
      </div>
      <div class="row head">
        ${icon(32, 32, svg`<rect width="18" height="32" rx="2" fill="#4a4a4a"/><path d="M6 2h6" stroke="#ddd"/><circle cx="9" cy="28" r="2" fill="#fff"/><rect x="20" y="14" width="12" height="18" rx="2" fill="#4a4a4a"/><path d="M29 21v4" stroke="#fff"/>`)}
        <span>Auto Layout</span>
      </div>
      <div class="row acts layouts">
        <button aria-label="Stack">${icon(32, 30, svg`<path d="M1 29V3h11l3 4h16v22zM1 7h14" stroke="#5c5c5c" stroke-width="2"/><path d="M16 10v16" stroke="#5c5c5c" stroke-width="4" stroke-dasharray="4 2"/>`)}</button>
        <button class="push" aria-label="Grid">${icon(30, 32, svg`<path d="M6 1h6v12H6zM18 1h6v12h-6zM6 19h6v12H6zM18 19h6v12h-6z" stroke="#5c5c5c" stroke-width="2"/>`)}</button>
        <button aria-label="Phone sizes">${icon(40, 32, svg`<rect x="6" y="1" width="16" height="30" rx="1" stroke="#5c5c5c" stroke-width="2"/><path d="M6 1h16v3H6zM6 26h16v5H6z" fill="#5c5c5c"/><path d="M26 15h12v16H26" stroke="#5c5c5c" stroke-width="2"/><path d="M37 15v16" stroke="#5c5c5c" stroke-width="4"/>`)}</button>
        <button aria-label="All devices">${icon(30, 32, svg`<path d="M14 31H1V1h20v5" stroke="#5c5c5c" stroke-width="2"/><path d="M1 0h20v4H1zM1 26h12v5H1z" fill="#5c5c5c"/><rect x="17" y="9" width="12" height="22" stroke="#5c5c5c" stroke-width="2"/><path d="M17 9h12v3H17zM17 27h12v4H17z" fill="#5c5c5c"/>`)}</button>
      </div>
      <div class="row pin">
        ${icon(14, 18, svg`<path d="M0 0l14 9-14 9z" fill="#8c8c8c"/>`)}<span>Pin</span>
        <button aria-label="Pin edges">${icon(50, 58, svg`<rect x="7" y="7" width="36" height="44" stroke="#a5a5a5" stroke-width="2"/><g fill="#eee" stroke="#4a4a4a" stroke-width="2"><circle cx="25" cy="7" r="6"/><circle cx="25" cy="51" r="6"/><circle cx="7" cy="29" r="6"/><circle cx="43" cy="29" r="6"/></g>`)}</button>
        <button aria-label="Pin horizontal center">${icon(38, 46, svg`<path d="M1 1h36v44H1zM19 1v44" stroke="#a5a5a5" stroke-width="2"/><circle cx="19" cy="23" r="6" fill="#eee" stroke="#4a4a4a" stroke-width="2"/>`)}</button>
        <button aria-label="Pin vertical center">${icon(38, 46, svg`<path d="M1 1h36v44H1zM1 23h36" stroke="#a5a5a5" stroke-width="2"/><circle cx="19" cy="23" r="6" fill="#eee" stroke="#4a4a4a" stroke-width="2"/>`)}</button>
        <button class="bin" aria-label="Remove pins">${icon(20, 24, svg`<path d="M0 5h20M6 4V1h8v3M3 6v16h14V6M8 9v10M12 9v10" stroke="#a3a3a3" stroke-width="2"/>`)}</button>
      </div>
      <div class="row make"><span>Make Exportable</span><button aria-label="Add export">${icon(24, 24, svg`<path d="M12 0v24M0 12h24" stroke="#9a9a9a" stroke-width="3"/>`)}</button></div>`;
  }
}

/* ---------- page ---------- */

@customElement("app-root")
export class AppRoot extends LitElement {
  static styles = [base, css`
    :host { display: grid; grid-template-rows: auto auto 1fr; height: 100vh; overflow: hidden; background: #555; }
    .work { display: grid; grid-template-columns: 468px 1fr 422px; min-height: 0; }
    .canvas { position: relative; overflow: hidden; background: #f1f1f1; color: #8b8b8b; font: 22px/47px "Inter", "Noto Sans CJK SC", sans-serif; }
    .canvas::before { content: ""; position: absolute; left: 64px; top: 171px; bottom: 0; width: 1px; background: #b5b5b5; }
    figure { position: absolute; }
    figcaption { height: 46px; padding-left: 6px; white-space: nowrap; }
    shop-board { box-shadow: 0 0 2px #0009, 0 3px 6px #0006; }
    .left { left: 65px; } .right { left: 942px; }
    .r1 { top: 125px; } .r2 { top: 706px; } .r3 { top: 1315px; }
    .grip { position: absolute; left: 58px; width: 14px; height: 14px; background: #fff; border: 1px solid #bbb; box-shadow: 0 1px 2px #0005; }
    .g1 { top: 164px; } .g2 { top: 1004px; }
  `];

  render() {
    return html`
      <system-bar></system-bar>
      <tool-bar></tool-bar>
      <main class="work">
        <layer-list></layer-list>
        <section class="canvas">
          <figure class="left r1"><figcaption>商品列表</figcaption><shop-board></shop-board></figure>
          <figure class="right r1"><figcaption>商品列表-页码</figcaption><shop-board tail></shop-board></figure>
          <figure class="left r2"><figcaption>按钮hint</figcaption><shop-board hints></shop-board></figure>
          <figure class="right r2"><figcaption>单个商品操作</figcaption><shop-board highlight></shop-board></figure>
          <figure class="left r3"><figcaption>商品列表-仓库中-多选</figcaption></figure>
          <figure class="right r3"><figcaption>商品列表-仓库中-上架商品</figcaption></figure>
          <span class="grip g1"></span><span class="grip g2"></span>
        </section>
        <inspector-panel></inspector-panel>
      </main>`;
  }
}
